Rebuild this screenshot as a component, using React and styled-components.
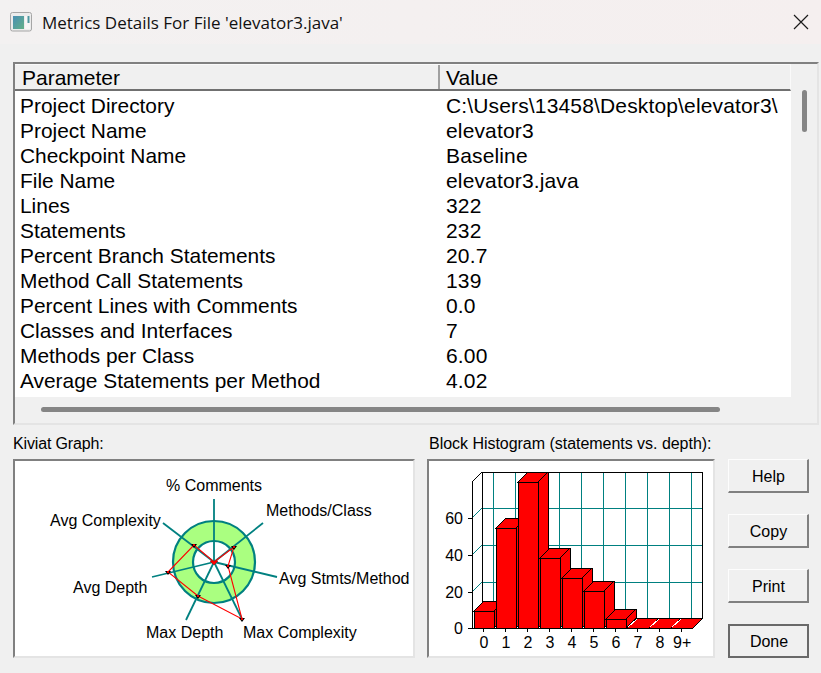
import styled, { createGlobalStyle } from "styled-components";

const GlobalStyle = createGlobalStyle`
  html, body {
    margin: 0;
    padding: 0;
    background: #f0f0f0;
  }
`;

const Window = styled.div`
  width: 821px;
  height: 673px;
  overflow: hidden;
  background: #f0f0f0;
  font-family: "Liberation Sans", Arial, sans-serif;
  color: #000;
`;

const TitleBar = styled.div`
  height: 44px;
  padding: 0 12px 0 10px;
  display: flex;
  align-items: center;
  background: linear-gradient(90deg, #f3f1f1, #f5efef);
`;
const TitleText = styled.div`
  margin-left: 10px;
  flex: 1;
  font-family: "Open Sans", sans-serif;
  font-size: 17px;
  color: #111;
`;

const Body = styled.div`
  padding: 18px 0 0 13px;
`;

const Sunken = styled.div`
  box-sizing: border-box;
  border-style: solid;
  border-width: 2px;
  border-color: #808080 #e4e4e4 #e4e4e4 #808080;
`;

const ListBox = styled(Sunken)`
  width: 806px;
  height: 363px;
  display: grid;
  grid-template-columns: 776px 1fr;
  grid-template-rows: 1fr 26px;
`;
const ListMain = styled.div`
  display: flex;
  flex-direction: column;
  min-height: 0;
`;
const HeaderRow = styled.div`
  height: 27px;
  display: flex;
  background: #f0f0f0;
  border-top: 1px solid #fafafa;
  border-right: 1px solid #fafafa;
  border-bottom: 2px solid #707070;
  box-sizing: border-box;
`;
const HeaderCell = styled.div`
  width: ${(p) => p.$width}px;
  box-sizing: border-box;
  padding-left: ${(p) => p.$pad}px;
  border-right: ${(p) => (p.$divider ? "2px solid #a0a0a0" : "none")};
  font-size: 21px;
  line-height: 25px;
`;
const Rows = styled.div`
  flex: 1;
  background: #fff;
  padding-top: 2px;
`;
const Row = styled.div`
  height: 25px;
  display: flex;
  font-size: 21px;
  line-height: 25px;
  white-space: nowrap;
`;
const NameCell = styled.div`
  width: 431px;
  padding-left: 5px;
  box-sizing: border-box;
  font-size: 20.9px;
`;
const ValueCell = styled.div`
  flex: 1;
  letter-spacing: 0.15px;
`;

const VScroll = styled.div`
  padding: 26px 0 0 11px;
`;
const VThumb = styled.div`
  width: 5px;
  height: 42px;
  border-radius: 3px;
  background: #858585;
`;
const HScroll = styled.div`
  grid-column: 1 / 3;
  padding: 10px 0 0 26px;
`;
const HThumb = styled.div`
  width: 679px;
  height: 5px;
  border-radius: 3px;
  background: #858585;
`;

const Bottom = styled.div`
  margin-top: 10px;
  display: grid;
  grid-template-columns: 402px 288px 81px;
  column-gap: 12px;
  align-items: end;
`;
const Panel = styled.div`
  display: flex;
  flex-direction: column;
`;
const PanelLabel = styled.div`
  font-size: 16px;
  line-height: 18px;
  height: 24px;
  padding-left: ${(p) => p.$indent || 0}px;
  letter-spacing: ${(p) => p.$tracking || 0}px;
  white-space: nowrap;
`;
const ChartBox = styled(Sunken)`
  height: 199px;
  background: #fff;
  svg {
    display: block;
  }
`;
const ButtonColumn = styled.div`
  margin-left: 1px;
  display: flex;
  flex-direction: column;
  gap: 21px;
`;
const Button = styled.button`
  box-sizing: border-box;
  width: 81px;
  height: 34px;
  padding: ${(p) => (p.$primary ? "1px 0 0 1px" : "3px 0 0 1px")};
  background: #f0f0f0;
  font-family: "Liberation Sans", Arial, sans-serif;
  font-size: 16px;
  color: #000;
  border-style: solid;
  border-width: ${(p) => (p.$primary ? "2px" : "1px 2px 2px 1px")};
  border-color: ${(p) =>
    p.$primary
      ? "#696969"
      : "#fdfdfd #808080 #808080 #fdfdfd"};
`;

const ChartText = styled.text`
  font-family: "Liberation Sans", Arial, sans-serif;
  font-size: 16px;
  fill: #000;
`;

const rows = [
  ["Project Directory", "C:\\Users\\13458\\Desktop\\elevator3\\"],
  ["Project Name", "elevator3"],
  ["Checkpoint Name", "Baseline"],
  ["File Name", "elevator3.java"],
  ["Lines", "322"],
  ["Statements", "232"],
  ["Percent Branch Statements", "20.7"],
  ["Method Call Statements", "139"],
  ["Percent Lines with Comments", "0.0"],
  ["Classes and Interfaces", "7"],
  ["Methods per Class", "6.00"],
  ["Average Statements per Method", "4.02"],
];

const WindowIcon = () => (
  <svg width="22" height="20" viewBox="0 0 22 20">
    <defs>
      <linearGradient id="ico" x1="0" y1="0" x2="1" y2="1">
        <stop offset="0" stopColor="#4a8fb4" />
        <stop offset="1" stopColor="#62b088" />
      </linearGradient>
    </defs>
    <rect x="0.5" y="0.5" width="21" height="18.5" rx="2" fill="#ececec" stroke="#a6a6a6" />
    <rect x="3" y="4" width="11" height="13" fill="url(#ico)" />
    <rect x="15" y="4" width="5" height="13" fill="#f6f6f6" />
    <rect x="17.5" y="4" width="2" height="7" fill="#4f97a0" />
  </svg>
);

const CloseIcon = () => (
  <svg width="16" height="16" viewBox="0 0 16 16">
    <path d="M1 1 L15 15 M15 1 L1 15" stroke="#1a1a1a" strokeWidth="1.2" fill="none" />
  </svg>
);

const TEAL = "#008080";
const CENTER = [214, 562];
const spokes = [
  [214, 499],
  [263, 523],
  [277, 577],
  [242, 619],
  [186, 620],
  [152, 577],
  [163, 523],
];
const kiviatPoints = [
  [214, 562],
  [234, 547],
  [228, 566],
  [242, 619],
  [198, 596],
  [168, 572],
  [194, 545],
];
const kiviatLabels = [
  ["% Comments", 166, 491],
  ["Methods/Class", 266, 516],
  ["Avg Stmts/Method", 279, 584],
  ["Max Complexity", 243, 638],
  ["Max Depth", 146, 638],
  ["Avg Depth", 73, 593],
  ["Avg Complexity", 50, 526],
];

// svg coordinates are the page's own, the viewBox starts at the box's inner corner
const KiviatGraph = () => (
  <svg width="398" height="195" viewBox="15 461 398 195">
    <circle cx={CENTER[0]} cy={CENTER[1]} r="41" fill="#aaff80" stroke={TEAL} strokeWidth="2.2" />
    <circle cx={CENTER[0]} cy={CENTER[1]} r="21" fill="#fff" stroke={TEAL} strokeWidth="2.2" />
    {spokes.map(([x, y]) => (
      <line key={`${x}-${y}`} x1={CENTER[0]} y1={CENTER[1]} x2={x} y2={y} stroke={TEAL} strokeWidth="1.8" />
    ))}
    <polygon
      points={kiviatPoints.map((p) => p.join(",")).join(" ")}
      fill="none"
      stroke="#ff0000"
      strokeWidth="1.1"
    />
    {kiviatPoints.map(([x, y], i) =>
      i === 0 ? (
        <path key={i} d={`M${x - 4} ${y - 1} L${x + 4} ${y - 1} L${x} ${y + 3} Z`} fill="#ff0000" stroke="#b00000" strokeWidth="0.5" />
      ) : (
        <g key={i}>
          <path d={`M${x - 3} ${y - 1} H${x + 3} L${x} ${y + 3} Z`} fill="#000" />
          <rect x={x - 1} y={y - 1} width="2" height="2" fill="#e00000" />
        </g>
      )
    )}
    {kiviatLabels.map(([label, x, y]) => (
      <ChartText key={label} x={x} y={y}>
        {label}
      </ChartText>
    ))}
  </svg>
);

const gridX = [493, 515, 537, 559, 581, 603, 625, 647, 669, 691];
const gridY = [508, 545, 582];
const bars = [
  [474, 611],
  [496, 528],
  [518, 482],
  [540, 558],
  [562, 578],
  [584, 591],
  [606, 619],
];
const ticks = ["0", "1", "2", "3", "4", "5", "6", "7", "8", "9+"];
const yLabels = [
  ["60", 518],
  ["40", 555],
  ["20", 592],
  ["0", 628],
];

const BlockHistogram = () => (
  <svg width="284" height="195" viewBox="429 461 284 195" shapeRendering="crispEdges">
    {gridX.map((x) => (
      <line key={x} x1={x} y1="472" x2={x} y2="618" stroke={TEAL} strokeWidth="1" />
    ))}
    {gridY.map((y) => (
      <path key={y} d={`M472 ${y + 10} L482 ${y} H702`} stroke={TEAL} fill="none" strokeWidth="1" />
    ))}
    <path d="M472 628 V482 L482 472 H702 V618 L692 628" stroke="#000" fill="none" strokeWidth="1" />
    <line x1="482" y1="472" x2="482" y2="618" stroke="#000" strokeWidth="1" />
    <line x1="468" y1="628" x2="692" y2="628" stroke="#000" strokeWidth="1" />
    {yLabels.map(([label, y]) => (
      <g key={label}>
        <line x1="468" y1={y} x2="472" y2={y} stroke="#000" strokeWidth="1" />
        <ChartText x="463" y={y + 6} textAnchor="end">
          {label}
        </ChartText>
      </g>
    ))}
    {bars.map(([x, top]) => (
      <g key={x} fill="#ff0000" stroke="#000" strokeWidth="1">
        <path d={`M${x} ${top} L${x + 10} ${Math.max(top - 10, 472)} H${x + 30} V${618} L${x + 20} 628 V${top} Z`} />
        <path d={`M${x + 20} ${top} L${x + 30} ${Math.max(top - 10, 472)}`} fill="none" />
        <rect x={x} y={top} width="20" height={628 - top} />
      </g>
    ))}
    {[627, 649, 671].map((x) => (
      <path key={x} d={`M${x} 628 L${x + 10} 618 H${x + 32} L${x + 22} 628 Z`} fill="#ff0000" stroke="#000" strokeWidth="1" />
    ))}
    {[627, 649, 671].map((x) => (
      <line key={x} x1={x + 1} y1="627" x2={x + 10} y2="619" stroke="#fff" strokeWidth="1" />
    ))}
    {ticks.map((label, i) => (
      <g key={label}>
        <line x1={483 + i * 22} y1="628" x2={483 + i * 22} y2="632" stroke="#000" strokeWidth="1" />
        <ChartText x={484 + i * 22} y="648" textAnchor={label === "9+" ? "start" : "middle"} dx={label === "9+" ? -9 : 0}>
          {label}
        </ChartText>
      </g>
    ))}
  </svg>
);

export default function App() {
  return (
    <>
      <GlobalStyle />
      <Window>
        <TitleBar>
          <WindowIcon />
          <TitleText>Metrics Details For File 'elevator3.java'</TitleText>
          <CloseIcon />
        </TitleBar>
        <Body>
          <ListBox>
            <ListMain>
              <HeaderRow>
                <HeaderCell $width={425} $pad={7} $divider>
                  Parameter
                </HeaderCell>
                <HeaderCell $width={350} $pad={6}>
                  Value
                </HeaderCell>
              </HeaderRow>
              <Rows>
                {rows.map(([name, value]) => (
                  <Row key={name}>
                    <NameCell>{name}</NameCell>
                    <ValueCell>{value}</ValueCell>
                  </Row>
                ))}
              </Rows>
            </ListMain>
            <VScroll>
              <VThumb />
            </VScroll>
            <HScroll>
              <HThumb />
            </HScroll>
          </ListBox>
          <Bottom>
            <Panel>
              <PanelLabel $tracking={-0.15}>Kiviat Graph:</PanelLabel>
              <ChartBox>
                <KiviatGraph />
              </ChartBox>
            </Panel>
            <Panel>
              <PanelLabel $indent={2} $tracking={-0.03}>
                Block Histogram (statements vs. depth):
              </PanelLabel>
              <ChartBox>
                <BlockHistogram />
              </ChartBox>
            </Panel>
            <ButtonColumn>
              <Button>Help</Button>
              <Button>Copy</Button>
              <Button>Print</Button>
              <Button $primary>Done</Button>
            </ButtonColumn>
          </Bottom>
        </Body>
      </Window>
    </>
  );
}
